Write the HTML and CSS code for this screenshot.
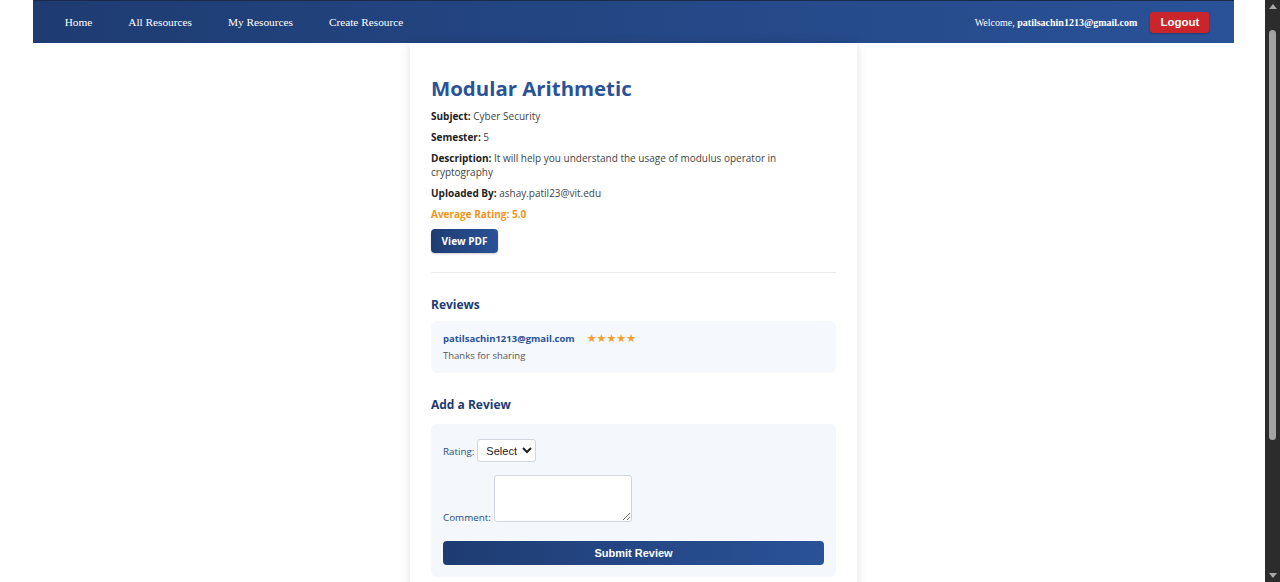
FILE: index.html
```html
<!DOCTYPE html>
<html lang="en">
<head>
<meta charset="utf-8">
<title>Modular Arithmetic</title>
<link rel="stylesheet" href="styles.css">
</head>
<body>
<nav class="navbar">
  <ul class="nav-links">
    <li><a href="#">Home</a></li>
    <li><a href="#">All Resources</a></li>
    <li><a href="#">My Resources</a></li>
    <li><a href="#">Create Resource</a></li>
  </ul>
  <div class="nav-user">
    <span class="welcome">Welcome, <strong>patilsachin1213@gmail.com</strong></span>
    <button class="logout">Logout</button>
  </div>
</nav>

<main class="card">
  <h1 class="title">Modular Arithmetic</h1>
  <p class="info"><strong>Subject:</strong> Cyber Security</p>
  <p class="info"><strong>Semester:</strong> 5</p>
  <p class="info"><strong>Description:</strong> It will help you understand the usage of modulus operator in cryptography</p>
  <p class="info"><strong>Uploaded By:</strong> ashay.patil23@vit.edu</p>
  <p class="info rating">Average Rating: 5.0</p>
  <button class="btn-pdf">View PDF</button>

  <hr class="divider">

  <h3 class="section-title">Reviews</h3>
  <div class="review">
    <div class="review-head">
      <span class="review-user">patilsachin1213@gmail.com</span>
      <span class="stars">★★★★★</span>
    </div>
    <p class="review-text">Thanks for sharing</p>
  </div>

  <h3 class="section-title">Add a Review</h3>
  <form class="review-form">
    <div class="form-row">
      <label class="form-label">Rating:</label>
      <select class="select">
        <option>Select</option>
      </select>
    </div>
    <div class="form-row">
      <label class="form-label form-label-bottom">Comment:</label>
      <textarea class="comment"></textarea>
    </div>
    <button type="button" class="btn-submit">Submit Review</button>
  </form>
</main>

<div class="scrollbar" aria-hidden="true">
  <span class="sb-arrow sb-up"></span>
  <span class="sb-thumb"></span>
  <span class="sb-arrow sb-down"></span>
</div>
</body>
</html>
```

FILE: styles.css
```css
html {
  background: #ffffff;
}

body {
  margin: 0 14px 0 1px;
  background: #ffffff;
  font-family: "Open Sans", "Noto Sans", sans-serif;
  color: #333;
}

/* browser scrollbar (overlay chrome) */
.scrollbar {
  position: fixed;
  top: 0;
  right: 0;
  bottom: 0;
  width: 15px;
  background: #2c2c2c;
  display: flex;
  flex-direction: column;
  align-items: center;
}

.sb-arrow {
  width: 0;
  height: 0;
  border-left: 4px solid transparent;
  border-right: 4px solid transparent;
}

.sb-up {
  margin-top: 4px;
  border-bottom: 5px solid #a8a8a8;
}

.sb-thumb {
  width: 7px;
  height: 410px;
  margin-top: 21px;
  background: #a3a3a3;
  border-radius: 4px;
}

.sb-down {
  margin-top: auto;
  margin-bottom: 4px;
  border-top: 5px solid #a8a8a8;
}

.navbar {
  width: 95%;
  margin: 0 auto;
  height: 43px;
  display: flex;
  align-items: center;
  justify-content: space-between;
  background: linear-gradient(90deg, #1e3c72, #2a5298);
  border-top: 1px solid #1a2a48;
  box-sizing: border-box;
  padding: 0 25px 0 32px;
}

.nav-links {
  list-style: none;
  margin: 0;
  padding: 0 0 5px;
  display: flex;
  gap: 36px;
}

.nav-links a {
  color: #ffffff;
  text-decoration: none;
  font-family: "Liberation Serif", "Times New Roman", serif;
  font-size: 11.3px;
}

.nav-user {
  display: flex;
  align-items: center;
  gap: 13px;
}

.welcome {
  color: #ffffff;
  font-family: "Liberation Serif", "Times New Roman", serif;
  font-size: 10px;
}

.logout {
  background: #c9252b;
  color: #ffffff;
  border: none;
  border-radius: 3px;
  font-family: "Liberation Sans", Arial, sans-serif;
  font-weight: bold;
  font-size: 11.5px;
  width: 59px;
  height: 21px;
  padding: 0;
  box-shadow: 0 1px 2px rgba(0, 0, 0, 0.25);
}

.card {
  display: block;
  width: 447px;
  box-sizing: border-box;
  margin: 0 auto;
  background: #ffffff;
  padding: 32px 21px 20px;
  box-shadow: 0 0 10px rgba(0, 0, 0, 0.12);
}

.title {
  margin: 0 0 8px;
  font-size: 20.4px;
  font-weight: 700;
  color: #2a5298;
  line-height: 26px;
}

.info {
  margin: 0 0 7px;
  font-size: 10px;
  line-height: 14px;
  color: #444;
}

.info strong {
  color: #222;
}

.rating {
  color: #f0961c;
  font-weight: 700;
  margin-bottom: 8px;
}

.btn-pdf {
  display: block;
  background: linear-gradient(90deg, #1e3c72, #2a5298);
  color: #ffffff;
  border: none;
  border-radius: 4px;
  font-family: "Open Sans", "Noto Sans", sans-serif;
  font-weight: 700;
  font-size: 10px;
  width: 67px;
  height: 24px;
  padding: 0;
  box-shadow: 0 1px 2px rgba(0, 0, 0, 0.2);
}

.divider {
  border: none;
  border-top: 1px solid #ececec;
  margin: 19px 0 23px;
}

.section-title {
  margin: 0 0 7px;
  font-size: 12px;
  line-height: 18px;
  font-weight: 700;
  color: #1e3c72;
}

.review {
  background: #f5f8fc;
  border-radius: 6px;
  padding: 11px 12px 10px;
  margin-bottom: 23px;
}

.review-head {
  display: flex;
  align-items: center;
  gap: 12px;
}

.review-user {
  font-size: 9.5px;
  font-weight: 700;
  color: #2a5298;
  line-height: 14px;
}

.stars {
  color: #f0a030;
  font-size: 11px;
  letter-spacing: 0;
  font-family: "DejaVu Sans", sans-serif;
  line-height: 14px;
}

.review-text {
  margin: 3px 0 0;
  font-size: 9.5px;
  color: #555;
  line-height: 14px;
}

.review-form {
  background: #f4f7fb;
  border-radius: 6px;
  padding: 15px 12px 12px;
  margin-top: 10px;
}

.form-row {
  display: flex;
  align-items: flex-end;
  gap: 3px;
  margin-bottom: 13px;
}

.form-label {
  font-size: 9.8px;
  color: #2a4a7a;
  line-height: 12px;
  margin-bottom: 4px;
}

.form-label-bottom {
  margin-bottom: -2px;
}

.select {
  font-family: "Liberation Sans", Arial, sans-serif;
  font-size: 11px;
  height: 23px;
  border: 1px solid #cfd6e0;
  border-radius: 3px;
  background: #ffffff;
  color: #222;
  padding: 0 2px 0 4px;
}

.comment {
  width: 138px;
  height: 47px;
  box-sizing: border-box;
  border: 1px solid #cfd6e0;
  border-radius: 3px;
  background: #ffffff;
  margin: 0;
}

.btn-submit {
  display: block;
  width: 100%;
  height: 24px;
  background: linear-gradient(90deg, #1e3c72, #2a5298);
  color: #ffffff;
  border: none;
  border-radius: 4px;
  font-family: "Liberation Sans", Arial, sans-serif;
  font-weight: bold;
  font-size: 11px;
  margin-top: 19px;
}
```
